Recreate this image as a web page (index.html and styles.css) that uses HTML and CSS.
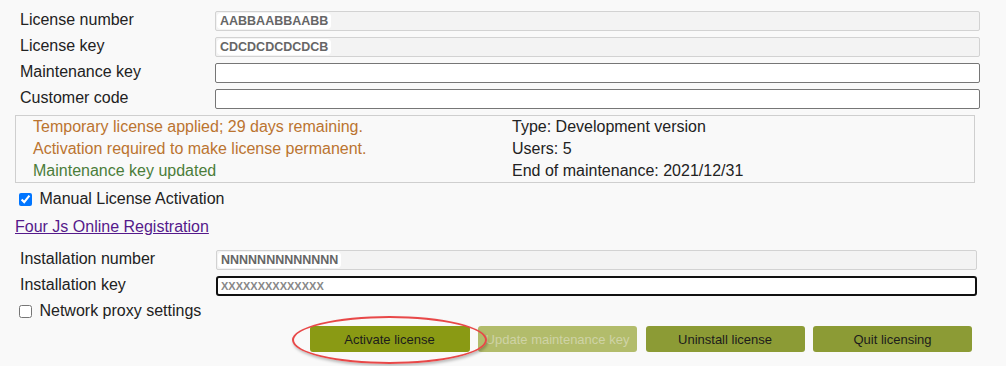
FILE: index.html
```html
<!DOCTYPE html>
<html>
<head>
<meta charset="utf-8">
<link rel="stylesheet" href="styles.css">
</head>
<body>
<div class="page">
  <div class="form-grid">
    <div class="label">License number</div>
    <div class="field readonly"><span class="val bold">AABBAABBAABB</span></div>
    <div class="label">License key</div>
    <div class="field readonly"><span class="val bold">CDCDCDCDCDCB</span></div>
    <div class="label">Maintenance key</div>
    <div class="field editable"></div>
    <div class="label">Customer code</div>
    <div class="field editable"></div>
  </div>

  <div class="status">
    <div class="status-col">
      <div class="warn">Temporary license applied; 29 days remaining.</div>
      <div class="warn">Activation required to make license permanent.</div>
      <div class="ok">Maintenance key updated</div>
    </div>
    <div class="status-col">
      <div>Type: Development version</div>
      <div>Users: 5</div>
      <div>End of maintenance: 2021/12/31</div>
    </div>
  </div>

  <label class="check-row"><input type="checkbox" checked> Manual License Activation</label>
  <div class="link-row"><a class="reg-link" href="#">Four Js Online Registration</a></div>

  <div class="form-grid install">
    <div class="label">Installation number</div>
    <div class="field readonly"><span class="val bold">NNNNNNNNNNNNN</span></div>
    <div class="label">Installation key</div>
    <div class="field focused"><span class="val xs">XXXXXXXXXXXXXX</span></div>
  </div>

  <label class="check-row proxy"><input type="checkbox"> Network proxy settings</label>

  <div class="buttons">
    <div class="btn primary">Activate license<span class="ring"></span></div>
    <div class="btn disabled">Update maintenance key</div>
    <div class="btn">Uninstall license</div>
    <div class="btn">Quit licensing</div>
  </div>
</div>
</body>
</html>
```

FILE: styles.css
```css
html, body {
  margin: 0;
  padding: 0;
  background: #f9f9f9;
}
body {
  font-family: "Liberation Sans", Arial, sans-serif;
  font-size: 16px;
  color: #222;
  width: 1006px;
  height: 366px;
  overflow: hidden;
}
.page {
  padding: 11px 0 0 15px;
}
.form-grid {
  display: grid;
  grid-template-columns: 200px 765px;
  grid-auto-rows: 20px;
  row-gap: 6px;
}
.label {
  padding-left: 5px;
  line-height: 18px;
  white-space: nowrap;
}
.field {
  box-sizing: border-box;
  height: 20px;
  border-radius: 2px;
  display: flex;
  align-items: center;
  padding-left: 1px;
}
.readonly {
  background: #f3f3f3;
  border: 1px solid #d2d2d2;
}
.editable {
  background: #fff;
  border: 1px solid #767676;
}
.focused {
  background: #fff;
  border: 2px solid #111;
  border-radius: 3px;
  padding-left: 0;
}
.val {
  background: #fff;
  border-radius: 4px;
  padding: 0 3px;
  line-height: 16px;
  color: #666;
}
.bold {
  font-size: 12.5px;
  font-weight: bold;
}
.xs {
  font-size: 11px;
  font-weight: bold;
  color: #888;
}
.install {
  margin-top: 14px;
  grid-template-columns: 201px 761px;
}
.status {
  box-sizing: border-box;
  margin-top: 6px;
  width: 960px;
  height: 68px;
  border: 1px solid #cfcfcf;
  padding-left: 17px;
  display: grid;
  grid-template-columns: 479px 1fr;
  line-height: 22px;
}
.warn { color: #bb7430; }
.ok { color: #4b7d3a; }
.check-row {
  display: flex;
  align-items: center;
  height: 24px;
  margin-top: 4px;
  white-space: pre;
}
.check-row input {
  margin: 0 3px 0 4px;
  width: 13px;
  height: 13px;
}
.proxy {
  margin-top: 3px;
}
.link-row {
  margin-top: 7px;
  height: 18px;
  line-height: 18px;
}
.reg-link {
  color: #551a8b;
  text-decoration: underline;
}
.buttons {
  margin-top: 3px;
  display: flex;
  justify-content: flex-end;
  gap: 8.5px;
  padding-right: 34px;
}
.btn {
  position: relative;
  box-sizing: border-box;
  width: 159px;
  height: 26px;
  border-radius: 3px;
  background: #8c9b35;
  color: #1c1c1c;
  font-size: 13px;
  display: flex;
  align-items: center;
  justify-content: center;
}
.btn.primary {
  width: 160px;
  background: #8a9a14;
}
.btn.disabled {
  background: #b2bc6b;
  color: #cfd3a6;
}
.ring {
  position: absolute;
  left: -18px;
  top: -10px;
  width: 195px;
  height: 48px;
  box-sizing: border-box;
  border: 2.5px solid #e84848;
  border-radius: 50%;
  box-shadow: 1px 2px 3px rgba(0,0,0,0.25);
  z-index: 2;
  pointer-events: none;
}
```
